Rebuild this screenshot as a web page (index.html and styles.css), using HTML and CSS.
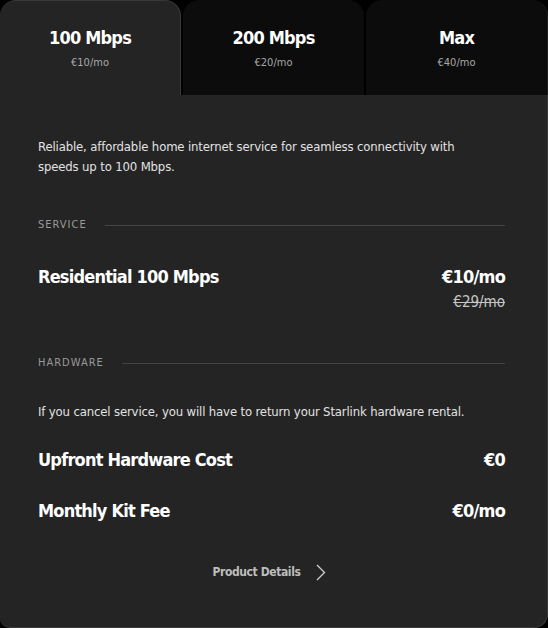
FILE: index.html
```html
<!DOCTYPE html>
<html>
<head>
<meta charset="utf-8">
<link rel="stylesheet" href="styles.css">
</head>
<body>
<div class="plan">
  <div class="tabs">
    <div class="tab active">
      <div class="tab-title">100 Mbps</div>
      <div class="tab-price">€10/mo</div>
    </div>
    <div class="tab">
      <div class="tab-title">200 Mbps</div>
      <div class="tab-price">€20/mo</div>
    </div>
    <div class="tab last">
      <div class="tab-title">Max</div>
      <div class="tab-price">€40/mo</div>
    </div>
  </div>
  <div class="panel">
    <p class="desc">Reliable, affordable home internet service for seamless connectivity with speeds up to 100 Mbps.</p>
    <div class="section-label label-service"><span>SERVICE</span><i class="rule"></i></div>
    <div class="row row-service">
      <span class="row-name">Residential 100 Mbps</span>
      <span class="row-value">€10/mo</span>
    </div>
    <div class="old-price"><s>€29/mo</s></div>
    <div class="section-label label-hardware"><span>HARDWARE</span><i class="rule"></i></div>
    <p class="note">If you cancel service, you will have to return your Starlink hardware rental.</p>
    <div class="row row-upfront">
      <span class="row-name">Upfront Hardware Cost</span>
      <span class="row-value">€0</span>
    </div>
    <div class="row row-monthly">
      <span class="row-name">Monthly Kit Fee</span>
      <span class="row-value">€0/mo</span>
    </div>
    <div class="details">
      <span>Product Details</span>
      <svg class="chev" width="10" height="17" viewBox="0 0 10 17"><path d="M1 1 L8.5 8.5 L1 16" fill="none" stroke="#cfcfcf" stroke-width="1.3"/></svg>
    </div>
  </div>
</div>
</body>
</html>
```
FILE: styles.css
```css
html, body {
  margin: 0;
  padding: 0;
  background: #000;
}
body {
  font-family: "DejaVu Sans Condensed", Roboto, sans-serif;
  color: #fff;
  width: 548px;
  height: 628px;
  overflow: hidden;
}
.plan {
  width: 548px;
  height: 628px;
  display: flex;
  flex-direction: column;
}
.tabs {
  display: grid;
  grid-template-columns: 181px 181px 182px;
  column-gap: 2px;
  height: 95px;
  flex: none;
}
.tab {
  background: #0c0c0c;
  border-radius: 16px 16px 0 0;
  text-align: center;
  padding-top: 26px;
  box-sizing: border-box;
}
.tab.last {
  border-right: 1px solid #1e1e1e;
}
.tab.active {
  background: #242424;
  border-top: 1px solid #383838;
  border-right: 1px solid #3a3a3a;
  padding-top: 25px;
}
.tab-title {
  font-size: 18px;
  font-weight: bold;
  line-height: 24px;
  letter-spacing: -0.8px;
}
.tab-price {
  margin-top: 6px;
  font-size: 11px;
  line-height: 14px;
  color: #a8a8a8;
}
.panel {
  flex: 1;
  background: #242424;
  border-right: 1px solid #3a3a3a;
  border-bottom: 1px solid #3a3a3a;
  border-radius: 0 0 14px 10px;
  padding: 42px 42px 0 38px;
}
.desc, .note {
  margin: 0;
  font-size: 13px;
  line-height: 20px;
  letter-spacing: -0.15px;
  color: #e2e2e2;
}
.desc { max-width: 440px; }
.section-label {
  display: flex;
  align-items: center;
  gap: 18px;
  font-size: 11px;
  line-height: 16px;
  letter-spacing: 1px;
  color: #9a9a9a;
}
.label-service { margin-top: 40px; }
.label-hardware { margin-top: 44px; }
.rule {
  flex: 1;
  height: 1px;
  background: #444;
}
.row {
  display: flex;
  justify-content: space-between;
  font-size: 18px;
  font-weight: bold;
  line-height: 24px;
  letter-spacing: -0.8px;
}
.row-service { margin-top: 32px; }
.row-upfront { margin-top: 26px; }
.row-monthly { margin-top: 27px; }
.old-price {
  margin-top: 4px;
  text-align: right;
  font-size: 15px;
  line-height: 18px;
  color: #c4c4c4;
}
.note { margin-top: 31px; }
.details {
  margin-top: 39px;
  display: flex;
  justify-content: center;
  align-items: center;
  gap: 16px;
  font-size: 12px;
  font-weight: bold;
  line-height: 20px;
  letter-spacing: -0.4px;
  color: #bdbdbd;
  padding-right: 4px;
}
.chev { display: block; }
```
